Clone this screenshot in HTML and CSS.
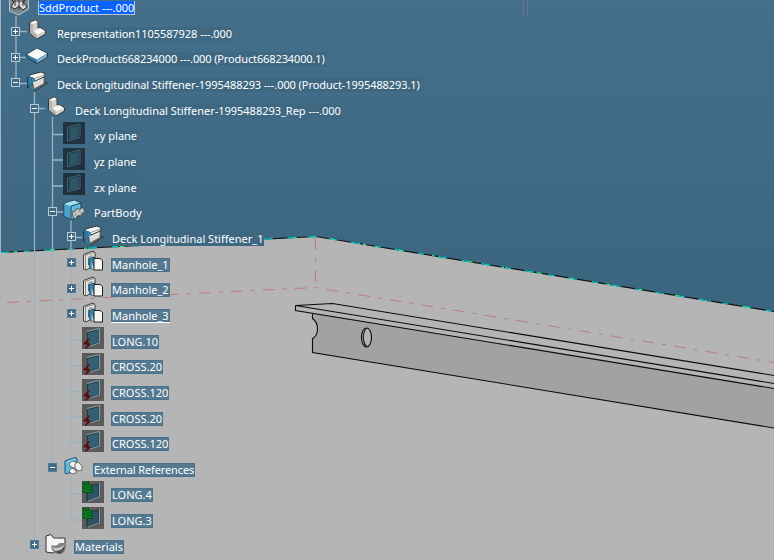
FILE: index.html
```
<!DOCTYPE html>
<html lang="en">
<head>
<meta charset="utf-8">
<title>Deck Longitudinal Stiffener</title>
<link rel="stylesheet" href="styles.css">
</head>
<body>
<svg width="0" height="0" class="defs">
  <symbol id="rep" viewBox="0 0 22 22"><path d="M3.500 3.500 9.500 1l2.500 1.500v6.500l2-.500 5.500 3.500v3L11 20 3.500 14z" fill="#d0cfca" stroke="#3a3a3a"/><path d="M4 4l3 1.500v7.500l4 3v3.500L4 14z" fill="#b5b4b0"/><path d="M4.500 3.500 9.500 1.500 11.500 3 7.500 5zM8 12l6-3 5 3-7.500 3.500z" fill="#fbfbf8"/></symbol>
  <symbol id="deck" viewBox="0 0 22 22"><path d="M.5 9.500 11 3.500l10.500 5v3.500L11 18.500 .5 12.500z" fill="#2f7ba3" stroke="#1c3442"/><path d="M1 9.500 11 3.500l10 5-10 6z" fill="#fafafa"/><path d="M11 15v3l10-6V9z" fill="#7fb2ca"/></symbol>
  <symbol id="stiff" viewBox="0 0 22 22"><path d="M1 15.500 14 10l7.500 2L9 20z" fill="#636363" stroke="#373737"/><path d="M6 8 18 4.500v8L8 18z" fill="#dcdcda" stroke="#555" stroke-width=".7"/><path d="M2.500 5.500 5 3.500 15 1l3.500 1.500.5 3-10 4.500-1-2.500z" fill="#f5f5f3" stroke="#333"/><path d="M8.500 7.500 18.500 4" stroke="#999"/><path d="M2.500 6 8 8v2L4.500 9.500V17l4 2" fill="none" stroke="#2283b5" stroke-width="1.700"/><path d="M1.500 6v11" stroke="#173f55"/></symbol>
  <symbol id="plane" viewBox="0 0 22 22"><path fill="#20323f" d="M0 0h22v22H0z"/><path d="M6 5.500 16 3.500v12L6 18z" fill="#2f5567" stroke="#1d3d4e"/><path d="M4.500 5v14l12.500-3.500M5 5l12-3v13" fill="none" stroke="#3f6578"/></symbol>
  <symbol id="body" viewBox="0 0 22 22"><path d="M1 4.500 11 1l7 3v12L8 21l-7-4z" fill="#67b9dc" stroke="#163b50"/><path d="M1.500 4.500 11 1.500l6.500 2.500L8 7z" fill="#a8e0f2"/><path d="M1.500 5.500 7.500 8v12l-6-3z" fill="#4aa1ca"/><path d="M8 7v13M8 7l10-3" stroke="#1c4a63"/><path d="M9 13q4 0 5-4 3 3 6-1l1.500 4-4 5q-3-2-5 3l-2-1z" fill="#c4c4c2" stroke="#555"/><path d="M12 14l2 4M16 11l2 4" fill="none" stroke="#8b8b89"/></symbol>
  <symbol id="hole" viewBox="0 0 22 22"><path d="M1.500 4.500 11 1l2 1.500V15L4 20l-2.500-1z" fill="#e3e3e0" stroke="#383838"/><path d="M3.500 5v14M1.500 4.500l2 .8L13 2" stroke="#888" fill="none"/><path d="M6.500 15V8q1-3 4-2" fill="none" stroke="#777"/><path d="M7 9l4-2 3 1.500V19H9l-2-4z" fill="#3483aa" stroke="#17506f"/><path d="M9.500 12v7h3" fill="#a9cfe1"/><path d="M12 8.500h6l2.500 2V20H12z" fill="#f7f7f5" stroke="#222"/></symbol>
  <symbol id="broken" viewBox="0 0 22 22"><path fill="#5a5a5a" d="M0 0h22v22H0z"/><path d="M5.500 5.500 17 2.500v13.500L5.500 19z" fill="#355f73" stroke="#1d3c4b"/><path d="M5 4.500 17.500 1.500V16L8 19" fill="none" stroke="#8d9ca3"/><path d="M7.500 11.500 2.500 16.500 7 17.500 3.500 21.500M2 16h5" fill="none" stroke="#660909" stroke-width="1.600"/></symbol>
  <symbol id="linked" viewBox="0 0 22 22"><path fill="#5a5a5a" d="M0 0h22v22H0z"/><path d="M5 6 17 3v13.500L5 19.500z" fill="#2f5365" stroke="#172e3b"/><path d="M17.500 2v14L6 20" fill="none" stroke="#8aa0ab"/><path d="M1 1h2v3l2-.5V0h1.500v3.500H10v8H4L1 11z" fill="#0b7f22" stroke="#034e10"/><path d="M5 6h5M5 8.500h5M1.500 7h3" stroke="#034e10"/></symbol>
  <symbol id="ext" viewBox="0 0 22 22"><path d="M2 5 12 1.500l2 1V14L3.500 18 2 17z" fill="#62b7dc" stroke="#145879"/><path d="M4 6l8-3" stroke="#b4e3f4" fill="none"/><g fill="#f0f0ed" stroke="#555" stroke-width=".8"><path d="M6 8l3-3 4 1 2 3-3 3-4-1z"/><path d="M12 8l3-2 4 4v4l-4 1-3-3z"/><path d="M6 15l3-3 4 2v3l-4 1z"/></g></symbol>
  <symbol id="mat" viewBox="0 0 22 22"><path d="M1 18V2l5-1.500L8.500 4H20v9L8 19z" fill="#f4f4f2" stroke="#333"/><path d="M6.500 11q5 2 8-2h6v5q-1 6-6 6t-8-5z" fill="#818181"/><path d="M7 13q7 3 13-3l-4 6-6 1z" fill="#c9c9c9"/><path d="M9 17q7 1 11-5-1 7-6 8z" fill="#505050"/></symbol>
  <symbol id="prod" viewBox="0 0 22 22"><path d="M1.500 0h19v15L11 21l-9.500-4z" fill="#78868d" stroke="#b8c4ca"/><path d="M4 3l4-2 3 3 4-3 4 3-4 4 4 5-4 3-4-4-4 3-4-2 3-5-3-3z" fill="#d9d9d4" stroke="#252b2e"/><path d="M11 3v13M7 4v8M15 4v8M5 7h12" stroke="#333"/></symbol>
</svg>
<main class="viewport">
  <svg class="scene" width="774" height="560" viewBox="0 0 774 560">
    <path fill="#b5b5b5" d="M0 252.500 316 236.500 774 311.500V560H0z"/>
    <path d="M0 252.500 316 236.500 774 311.500" class="edge"/>
    <path d="M0 252.500 316 236.500 774 311.500" class="edge cyan"/>
    <path d="M0 252.500 316 236.500 774 311.500" class="edge green"/>
    <path d="M7 302.500 315 287.500 774 362.500M315.500 238V287" class="axis"/>
    <path fill="#a2a2a2" d="M312 313 774 388.500V428L312.500 352.500V338.500Q317.500 336 317.500 329T312.500 319z"/>
    <g class="beam"><path d="M774 375.500 332.500 303.500 295.500 305.500 774 383.500M295.500 305.500V310.500L774 388.500M312.500 313.500V318.500Q317.500 322 317.500 329T312.500 338.500V352.500L774 428"/><ellipse cx="366.500" cy="337.500" rx="5" ry="9.500" fill="#b5b5b5"/><path d="M366.500 328Q362.500 333 363.500 340 364 344 366.500 346.500"/></g>
    <path d="M523.500 0v16M527.500 0v16" stroke="#65798a"/>
    <path d="M.5 0V560" stroke="#a6b4bd"/>
    <g class="branches"><path d="M16 16V83M34.500 92V547M52.500 117V469M71 218V443M71 477V520"/><path d="M16 31.500H27M16 57.500H27M16 83.500H27M34 108.500H45M52 134.500H64M52 160H64M52 186H64M52 212H64M71 237.500H82M71 263H82M71 289H82M71 314.500H82M71 340H82M71 366H82M71 391.500H82M71 417H82M71 442.500H82M52 468.500H64M71 494H82M71 520H82M34 545.500H45"/></g>
  </svg>
  <ul class="tree">
    <li class="row l0"><i></i><svg><use href="#prod"/></svg><span class="selected">SddProduct ---.000</span></li>
    <li class="row l1"><i class="plus"></i><svg><use href="#rep"/></svg><span class="tight">Representation1105587928 ---.000</span></li>
    <li class="row l1"><i class="plus"></i><svg><use href="#deck"/></svg><span class="tighter">DeckProduct668234000 ---.000 (Product668234000.1)</span></li>
    <li class="row l1"><i class="minus"></i><svg><use href="#stiff"/></svg><span class="tight">Deck Longitudinal Stiffener-1995488293 ---.000 (Product-1995488293.1)</span></li>
    <li class="row l2"><i class="minus"></i><svg><use href="#rep"/></svg><span class="slight">Deck Longitudinal Stiffener-1995488293_Rep ---.000</span></li>
    <li class="row l3"><i></i><svg><use href="#plane"/></svg><span>xy plane</span></li>
    <li class="row l3"><i></i><svg><use href="#plane"/></svg><span>yz plane</span></li>
    <li class="row l3"><i></i><svg><use href="#plane"/></svg><span>zx plane</span></li>
    <li class="row l3"><i class="minus"></i><svg><use href="#body"/></svg><span>PartBody</span></li>
    <li class="row l4"><i class="plus"></i><svg><use href="#stiff"/></svg><span>Deck Longitudinal Stiffener_1</span></li>
    <li class="row l4 solid"><i class="plus"></i><svg><use href="#hole"/></svg><span>Manhole_1</span></li>
    <li class="row l4 solid"><i class="plus"></i><svg><use href="#hole"/></svg><span>Manhole_2</span></li>
    <li class="row l4 solid"><i class="plus"></i><svg><use href="#hole"/></svg><span class="inwork">Manhole_3</span></li>
    <li class="row l4 solid"><i></i><svg><use href="#broken"/></svg><span>LONG.10</span></li>
    <li class="row l4 solid"><i></i><svg><use href="#broken"/></svg><span>CROSS.20</span></li>
    <li class="row l4 solid"><i></i><svg><use href="#broken"/></svg><span>CROSS.120</span></li>
    <li class="row l4 solid"><i></i><svg><use href="#broken"/></svg><span>CROSS.20</span></li>
    <li class="row l4 solid"><i></i><svg><use href="#broken"/></svg><span>CROSS.120</span></li>
    <li class="row l3 solid"><i class="minus"></i><svg><use href="#ext"/></svg><span class="tighter">External References</span></li>
    <li class="row l4 solid"><i></i><svg><use href="#linked"/></svg><span>LONG.4</span></li>
    <li class="row l4 solid"><i></i><svg><use href="#linked"/></svg><span>LONG.3</span></li>
    <li class="row l2 solid"><i class="plus"></i><svg class="low"><use href="#mat"/></svg><span>Materials</span></li>
  </ul>
</main>
</body>
</html>
```
FILE: styles.css
```
* { box-sizing: border-box; }
body { margin: 0; overflow: hidden; }
.defs { position: absolute; }
.viewport {
  position: relative;
  width: 774px;
  height: 560px;
  overflow: hidden;
  background: linear-gradient(#446f8a, #3c6580 300px);
  font: 11px/14px "Noto Sans", sans-serif;
  color: #fff;
}
.scene { position: absolute; inset: 0; }
.edge { fill: none; stroke: #111; stroke-width: 1.2; }
.cyan { stroke: #00cfd4; stroke-dasharray: 9 15 6 14; }
.green { stroke: #1cf28b; stroke-dasharray: 5 29 3 33; stroke-dashoffset: 20; }
.axis { fill: none; stroke: #c07c7c; stroke-dasharray: 12 8 4 8; }
.beam { fill: none; stroke: #0c0c0c; stroke-width: 1.1; }
.branches { fill: none; stroke: #9ab3c2; stroke-width: 1.3; }
.tree { position: relative; margin: -7px 0 0; padding: 0; list-style: none; }
.row { display: flex; align-items: center; height: 25.67px; }
.l1 { padding-left: 11px; }
.l2 { padding-left: 30px; }
.l3 { padding-left: 48px; }
.l4 { padding-left: 67px; }
.row i { width: 9px; height: 9px; flex: none; margin-right: 6px; }
.l0 i { margin-right: -1px; }
.row svg { width: 22px; height: 22px; flex: none; margin-top: -2px; }
.row .low { margin-top: 0; }
.row span {
  margin: 4.4px 0 0 7px;
  padding: 0 1px;
  height: 14px;
  white-space: nowrap;
  background: #3e6882;
}
.l1 span, .l3 span { margin-left: 8px; }
.solid span { background: #557990; box-shadow: inset 0 0 0 1px #49718c; }
.row .slight { letter-spacing: -0.02px; }
.row .tight { letter-spacing: -0.07px; }
.row .tighter { letter-spacing: -0.12px; }
.row .selected { background: #0863ff; border: solid #b8c6cf; border-width: 0 1px 1px; padding: 0; margin-left: 8px; }
.row .inwork { border-bottom: 1px solid #fff; }
.plus, .minus { border: 1px solid #b8cad4; background: linear-gradient(#fff, #fff) center / 5px 1px no-repeat, #416b84; }
.plus { background: linear-gradient(#fff, #fff) center / 5px 1px no-repeat, linear-gradient(#fff, #fff) center / 1px 5px no-repeat, #416b84; }
.solid i { border-color: #537b93; }
```
